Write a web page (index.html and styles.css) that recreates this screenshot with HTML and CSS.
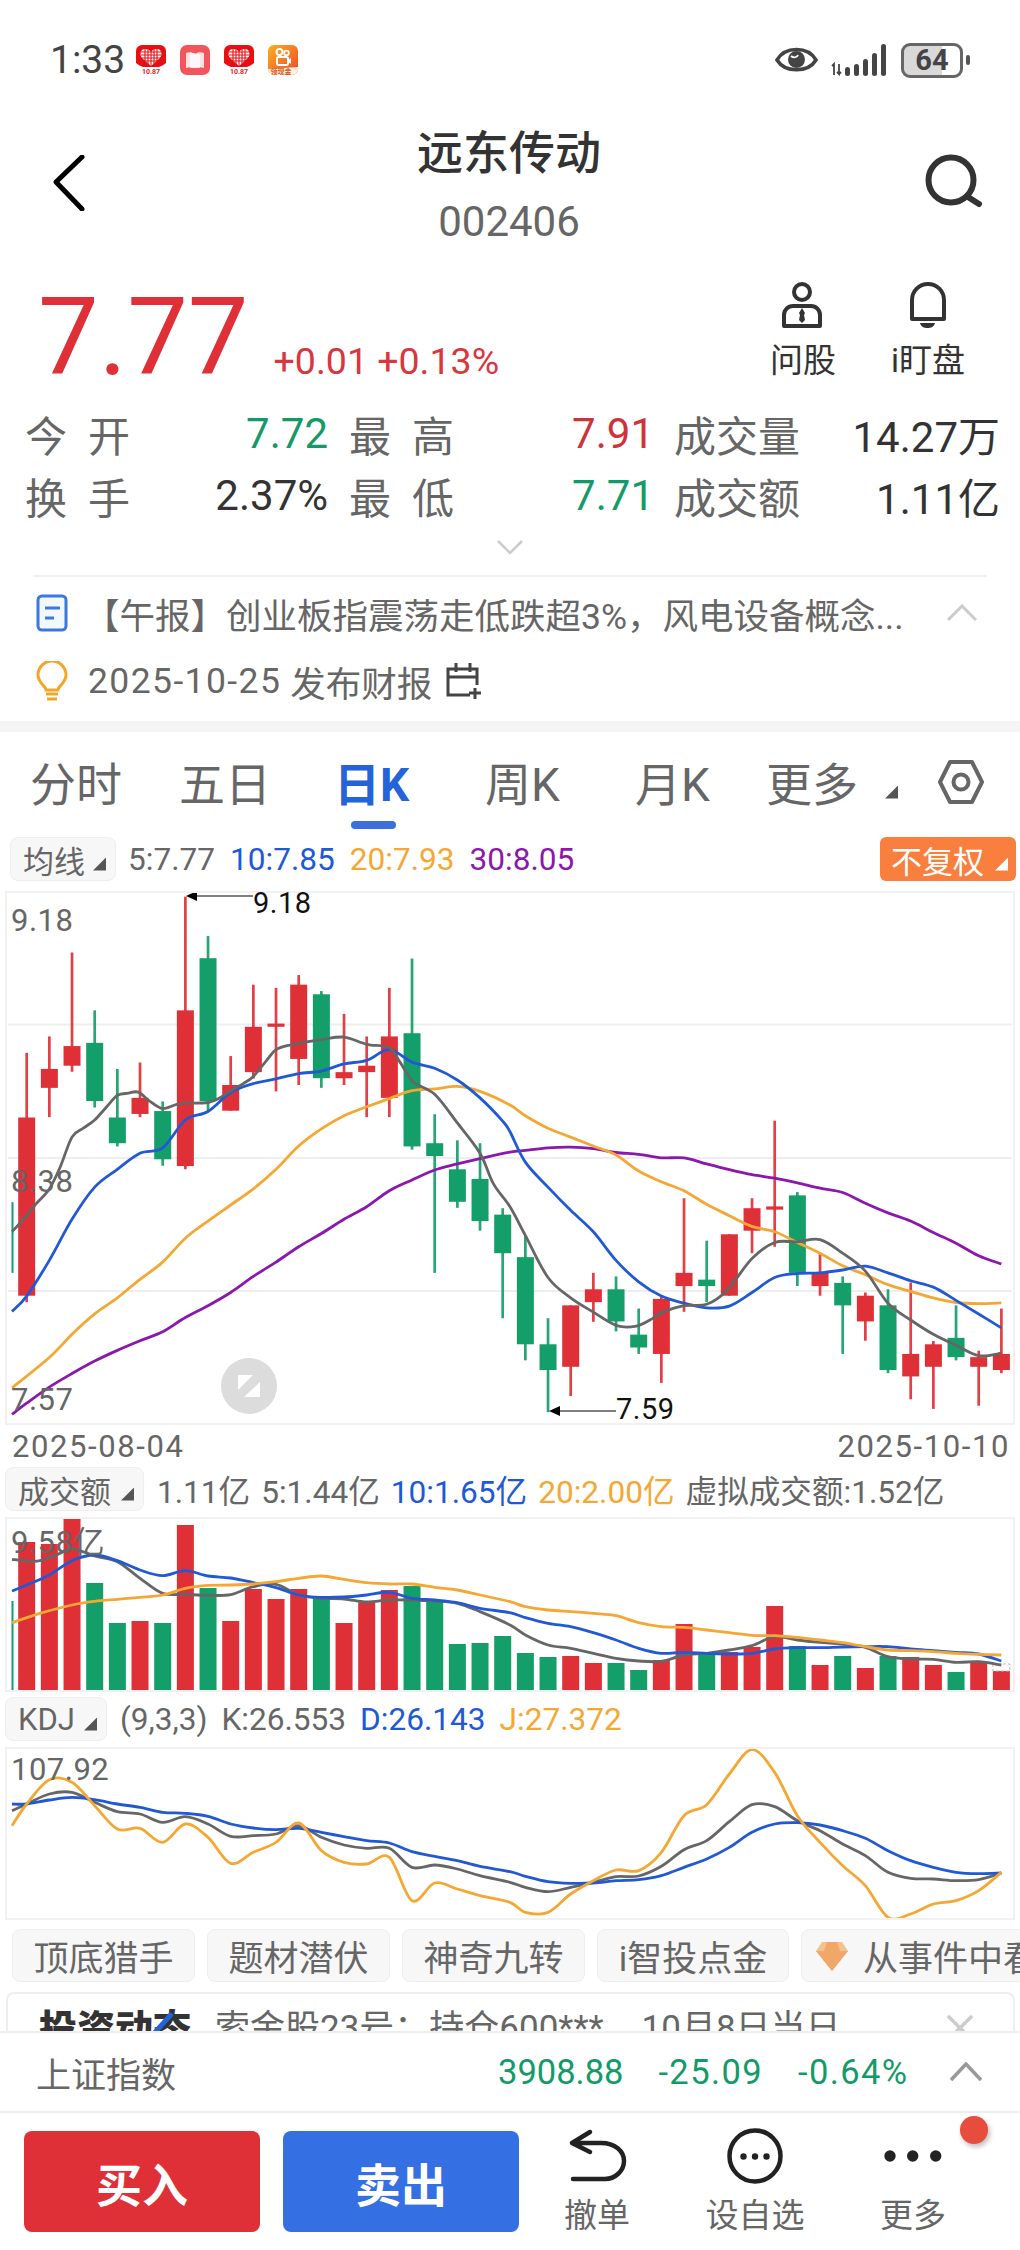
FILE: index.html
```html
<!DOCTYPE html>
<html lang="zh-CN">
<head>
  <meta charset="UTF-8">
  <meta name="viewport" content="width=device-width, initial-scale=1.0">
  <title>远东传动 002406</title>
  <link rel="stylesheet" href="styles.css">
</head>
<body>
  <div class="page">
    <div class="status">
      <span class="time">1:33</span>
      <svg class="app-icon" width="30" height="30" viewBox="0 0 30 30">
        <rect width="30" height="30" rx="6" fill="#fff"/>
        <path d="M0 6a6 6 0 0 1 6-6h18a6 6 0 0 1 6 6v12c-2 2-5 3-7 4H7c-2-1-5-2-7-4z" fill="#e60f14"/>
        <path d="M15 21L6 13C3 9 5 4 9 4c3 0 5 1 6 3 1-2 3-3 6-3 4 0 6 5 3 9z" fill="#fff"/>
        <path d="M5 7h20M5 10h20M5 13h20M8 16h14M9 3v16M12 3v18M15 3v18M18 3v18M21 3v16" stroke="#e60f14" stroke-width="1.1"/>
        <text x="15" y="29" class="app-text" fill="#d81e22">10.87</text>
      </svg>
      <svg class="app-icon" width="30" height="30" viewBox="0 0 30 30">
        <rect width="30" height="30" rx="7" fill="#f4545c"/>
        <path d="M6 8c3-1 6-1 9 1 3-2 6-2 9-1v15c-3-1-6-1-9 0-3-1-6-1-9 0z" fill="#fde3e3"/>
        <path d="M10 8h5v15h-5zM15 9h5v14h-5z" fill="#fff" opacity=".7"/>
      </svg>
      <svg class="app-icon" width="30" height="30" viewBox="0 0 30 30">
        <rect width="30" height="30" rx="6" fill="#fff"/>
        <path d="M0 6a6 6 0 0 1 6-6h18a6 6 0 0 1 6 6v12c-2 2-5 3-7 4H7c-2-1-5-2-7-4z" fill="#e60f14"/>
        <path d="M15 21L6 13C3 9 5 4 9 4c3 0 5 1 6 3 1-2 3-3 6-3 4 0 6 5 3 9z" fill="#fff"/>
        <path d="M5 7h20M5 10h20M5 13h20M8 16h14M9 3v16M12 3v18M15 3v18M18 3v18M21 3v16" stroke="#e60f14" stroke-width="1.1"/>
        <text x="15" y="29" class="app-text" fill="#d81e22">10.87</text>
      </svg>
      <svg class="app-icon" width="30" height="30" viewBox="0 0 30 30">
        <defs><linearGradient id="app-gold" x1="0" y1="0" x2="1" y2="1"><stop offset="0" stop-color="#fbb01c"/><stop offset="1" stop-color="#f0452c"/></linearGradient></defs>
        <rect width="30" height="30" rx="6" fill="url(#app-gold)"/>
        <path d="M0 24l30-2v2a6 6 0 0 1-6 6H6a6 6 0 0 1-6-6z" fill="#fff0d8"/>
        <circle cx="11.500" cy="7" r="3" fill="none" stroke="#fff" stroke-width="2"/>
        <circle cx="18.500" cy="8" r="2.300" fill="none" stroke="#fff" stroke-width="1.800"/>
        <rect x="9" y="12" width="11" height="8" rx="1.500" fill="none" stroke="#fff" stroke-width="2"/>
        <path d="M20 15l3-2v6l-3-2z" fill="#fff"/>
        <text x="13" y="28.500" class="app-text" fill="#d8541e">领现金</text>
      </svg>
      <span class="status-right">
        <svg width="44" height="28" viewBox="0 0 44 28">
          <path d="M2 14C10 0 33 0 41 14 33 27 10 27 2 14z" fill="none" stroke="#444" stroke-width="3.600"/>
          <circle cx="21.500" cy="13.500" r="8.500" fill="#444"/>
          <path d="M16 10c2 2 6 2 7-1" fill="none" stroke="#fff" stroke-width="1.800"/>
        </svg>
        <svg class="signal" width="60" height="34" viewBox="0 0 60 34">
          <path d="M2 23l2-2v11M9 21v10l-2-2m2 2l2-2" fill="none" stroke="#444" stroke-width="1.800"/>
          <rect x="15" y="24" width="5" height="9" rx="2.500" fill="#444"/>
          <rect x="24" y="21" width="5" height="12" rx="2.500" fill="#444"/>
          <rect x="33" y="16" width="5" height="17" rx="2.500" fill="#444"/>
          <rect x="42" y="10" width="5" height="23" rx="2.500" fill="#444"/>
          <rect x="51" y="1" width="5" height="32" rx="2.500" fill="#444"/>
        </svg>
        <span class="battery">64</span>
        <span class="battery-nub"></span>
      </span>
    </div>

    <div class="nav">
      <svg width="32" height="56" viewBox="0 0 32 56" class="back">
        <path d="M29 2L3 27l26 27" fill="none" stroke="#000" stroke-width="5" stroke-linecap="round" stroke-linejoin="round"/>
      </svg>
      <div class="title-box">
        <div class="name">远东传动</div>
        <div class="code">002406</div>
      </div>
      <svg width="58" height="54" viewBox="0 0 58 54" class="search">
        <circle cx="26" cy="26" r="22.500" fill="none" stroke="#333" stroke-width="6"/>
        <path d="M43 43l11 7" fill="none" stroke="#333" stroke-width="6" stroke-linecap="round"/>
      </svg>
    </div>

    <div class="quote">
      <div class="price-box">
        <span class="price">7.77</span>
        <span class="change">+0.01 +0.13%</span>
      </div>
      <div class="quote-actions">
        <div class="quote-action">
          <svg width="44" height="48" viewBox="0 0 44 48">
            <circle cx="21" cy="10" r="8" fill="none" stroke="#333" stroke-width="4"/>
            <path d="M3 44V33c0-5 4-9 9-9h18c5 0 9 4 9 9v11z" fill="none" stroke="#333" stroke-width="4" stroke-linejoin="round"/>
            <path d="M21 26l3 5-1 2 1 5-3 3-3-3 1-5-1-2z" fill="#333"/>
          </svg>
          <span>问股</span>
        </div>
        <div class="quote-action">
          <svg width="44" height="48" viewBox="0 0 44 48">
            <path d="M6 37V18a16 16 0 0 1 32 0v19z" fill="none" stroke="#333" stroke-width="4" stroke-linejoin="round"/>
            <path d="M14 41h15c-1 4-4 5-7.500 5S15 45 14 41z" fill="#333"/>
          </svg>
          <span>i盯盘</span>
        </div>
      </div>
    </div>

    <div class="stats">
      <span class="lbl lbl-wide"><i>今</i><i>开</i></span><span class="val green">7.72</span>
      <span class="lbl lbl-side"><i>最</i><i>高</i></span><span class="val red">7.91</span>
      <span class="lbl lbl-end">成交量</span><span class="val">14.27万</span>
      <span class="lbl lbl-wide"><i>换</i><i>手</i></span><span class="val">2.37%</span>
      <span class="lbl lbl-side"><i>最</i><i>低</i></span><span class="val green">7.71</span>
      <span class="lbl lbl-end">成交额</span><span class="val">1.11亿</span>
    </div>

    <div class="expand">
      <svg width="28" height="16" viewBox="0 0 28 16"><path d="M2 2l12 12L26 2" fill="none" stroke="#ccc" stroke-width="2.500"/></svg>
    </div>

    <div class="news">
      <svg class="row-icon" width="32" height="38" viewBox="0 0 32 38">
        <rect x="2" y="2" width="28" height="34" rx="4" fill="#f3f7fe" stroke="#3a78e0" stroke-width="3"/>
        <path d="M9 14h15M9 24h9" stroke="#3a78e0" stroke-width="3"/>
      </svg>
      <span class="news-text">【午报】创业板指震荡走低跌超3%，风电设备概念...</span>
      <svg width="32" height="18" viewBox="0 0 32 18" class="news-fold"><path d="M2 16L16 2l14 14" fill="none" stroke="#ccc" stroke-width="3"/></svg>
    </div>
    <div class="report">
      <svg class="row-icon" width="32" height="40" viewBox="0 0 32 40">
        <path d="M10 29c0-4-8-7-8-15a14 14 0 0 1 28 0c0 8-8 11-8 15z" fill="none" stroke="#f4a62a" stroke-width="3"/>
        <path d="M10 33h12M11 38h10" stroke="#f4a62a" stroke-width="3"/>
      </svg>
      <span class="report-date">2025-10-25</span>
      <span class="report-text">发布财报</span>
      <svg width="36" height="38" viewBox="0 0 36 38" class="calendar">
        <path d="M24 33H2V7h29v16M2 15h29M10 1v9M24 1v9M29 26v11M23 31h12" fill="none" stroke="#444" stroke-width="3"/>
      </svg>
    </div>

    <div class="band"></div>

    <div class="tabs">
      <span class="tab">分时</span>
      <span class="tab">五日</span>
      <span class="tab active">日K</span>
      <span class="tab">周K</span>
      <span class="tab">月K</span>
      <span class="tab tab-more">更多<b class="corner corner-more"></b></span>
      <svg width="46" height="44" viewBox="0 0 46 44" class="hex">
        <path d="M12 2h22l10 20-10 20H12L2 22z" fill="none" stroke="#666" stroke-width="4" stroke-linejoin="round"/>
        <circle cx="23" cy="22" r="7.500" fill="none" stroke="#666" stroke-width="4"/>
      </svg>
    </div>

    <div class="bar bar-ma">
      <span class="pick">均线<b class="corner"></b></span>
      <span class="gray">5:7.77</span>
      <span class="blue">10:7.85</span>
      <span class="orange">20:7.93</span>
      <span class="purple">30:8.05</span>
      <span class="adjust">不复权<b class="corner corner-white"></b></span>
    </div>

    <div class="chart chart-k">
      <svg id="k-chart" width="1006" height="530"></svg>
      <span class="axis axis-top">9.18</span>
      <span class="axis axis-mid">8.38</span>
      <span class="axis axis-low">7.57</span>
      <span class="mark mark-high">9.18</span>
      <span class="mark mark-low">7.59</span>
      <span class="zoom-btn">
        <svg width="56" height="56" viewBox="0 0 56 56">
          <circle cx="28" cy="28" r="28" fill="#dcdcdc"/>
          <path d="M17 17h15L17 32zM39 24v15H23z" fill="#fff"/>
        </svg>
      </span>
    </div>

    <div class="dates"><span>2025-08-04</span><span>2025-10-10</span></div>

    <div class="bar bar-vol">
      <span class="pick">成交额<b class="corner"></b></span>
      <span class="gray">1.11亿</span>
      <span class="gray">5:1.44亿</span>
      <span class="blue">10:1.65亿</span>
      <span class="orange">20:2.00亿</span>
      <span class="gray">虚拟成交额:1.52亿</span>
    </div>

    <div class="chart chart-vol">
      <svg id="vol-chart" width="1006" height="171"></svg>
      <span class="axis axis-vol">9.58亿</span>
    </div>

    <div class="bar bar-kdj">
      <span class="pick">KDJ<b class="corner"></b></span>
      <span class="gray">(9,3,3)</span>
      <span class="gray">K:26.553</span>
      <span class="blue">D:26.143</span>
      <span class="orange">J:27.372</span>
    </div>

    <div class="chart chart-kdj">
      <svg id="kdj-chart" width="1006" height="169"></svg>
      <span class="axis axis-kdj">107.92</span>
    </div>

    <div class="chips">
      <span class="chip">顶底猎手</span>
      <span class="chip">题材潜伏</span>
      <span class="chip">神奇九转</span>
      <span class="chip chip-wide">i智投点金</span>
      <span class="chip chip-gem">
        <svg width="34" height="30" viewBox="0 0 34 30">
          <path d="M7 1h20l6 9-16 20L1 10z" fill="#f5c28c"/>
          <path d="M1 10h32L17 30zM12 1h10l3 9H9z" fill="#efa868"/>
        </svg>
        从事件中看机会
      </span>
    </div>

    <div class="promo">
      <span class="promo-logo">投资动态</span>
      <span class="promo-slash"></span>
      <span class="promo-text">索金股23号：持仓600***</span>
      <span class="promo-date">10月8日当日</span>
      <svg width="28" height="28" viewBox="0 0 28 28" class="promo-close"><path d="M2 2l24 24M26 2L2 26" stroke="#ccc" stroke-width="3.500"/></svg>
    </div>

    <div class="index">
      <span class="index-name">上证指数</span>
      <span class="index-val">3908.88</span>
      <span class="index-val index-chg">-25.09</span>
      <span class="index-val index-chg">-0.64%</span>
      <svg width="34" height="20" viewBox="0 0 34 20"><path d="M2 18L17 2l15 16" fill="none" stroke="#999" stroke-width="3.500"/></svg>
    </div>

    <div class="trade">
      <button class="trade-btn buy">买入</button>
      <button class="trade-btn sell">卖出</button>
      <div class="trade-actions">
        <div class="trade-action">
          <svg width="60" height="58" viewBox="0 0 60 58">
            <path d="M23 5L5 16l18 9M5 16h29c14 0 23 8 23 18s-9 18-19 18H6" fill="none" stroke="#222" stroke-width="4.500" stroke-linecap="round" stroke-linejoin="round"/>
          </svg>
          <span>撤单</span>
        </div>
        <div class="trade-action">
          <svg width="60" height="58" viewBox="0 0 60 58">
            <circle cx="30" cy="29" r="25.500" fill="none" stroke="#222" stroke-width="4.500"/>
            <circle cx="18.500" cy="29.500" r="3.200" fill="#222"/>
            <circle cx="30" cy="29.500" r="3.200" fill="#222"/>
            <circle cx="41.500" cy="29.500" r="3.200" fill="#222"/>
          </svg>
          <span>设自选</span>
        </div>
        <div class="trade-action">
          <svg width="60" height="58" viewBox="0 0 60 58">
            <circle cx="7" cy="29" r="5.700" fill="#222"/>
            <circle cx="29.700" cy="29" r="5.700" fill="#222"/>
            <circle cx="52.700" cy="29" r="5.700" fill="#222"/>
          </svg>
          <span>更多</span>
        </div>
        <span class="dot"></span>
      </div>
    </div>
  </div>

  <script src="chart.js"></script>
</body>
</html>
```

FILE: styles.css
```css
* {
  box-sizing: border-box;
}

body {
  margin: 0;
  background-color: #fff;
  font-family: Roboto, "Noto Sans CJK SC", sans-serif;
  color: #333;
}

.page {
  width: 1020px;
  height: 2250px;
  overflow: hidden;
}

svg {
  display: block;
  flex: none;
}

.app-text {
  font-size: 7px;
  font-weight: 700;
  text-anchor: middle;
}

/* status bar */
.status {
  display: flex;
  align-items: center;
  height: 90px;
  padding: 30px 0 0 50px;
}

.time {
  font-size: 39px;
  color: #444;
  width: 86px;
}

.app-icon {
  margin-right: 14px;
}

.status-right {
  display: flex;
  align-items: center;
  margin-left: auto;
  margin-right: 50px;
}

.signal {
  margin: 0 11px 0 11px;
}

.battery {
  width: 62px;
  height: 35px;
  border: 3px solid #666;
  border-radius: 9px;
  background: linear-gradient(90deg, #d9d9d9 68%, #fff 68%);
  color: #444;
  font-size: 29px;
  font-weight: 700;
  line-height: 29px;
  text-align: center;
}

.battery-nub {
  width: 4px;
  height: 10px;
  margin-left: 3px;
  border-radius: 2px;
  background-color: #555;
}

/* title */
.nav {
  display: flex;
  align-items: flex-start;
  justify-content: space-between;
  height: 180px;
  padding: 33px 37px 0 53px;
}

.back {
  margin-top: 32px;
}

.search {
  margin-top: 31px;
}

.title-box {
  text-align: center;
  margin-left: 8px;
}

.name {
  font-size: 46px;
  font-weight: 500;
  line-height: 60px;
  color: #333;
}

.code {
  margin-top: 9px;
  font-size: 42px;
  line-height: 60px;
  color: #666;
}

/* price */
.quote {
  display: flex;
  justify-content: space-between;
  height: 132px;
  padding: 12px 42px 0 38px;
}

.price-box {
  display: flex;
  align-items: baseline;
}

.price {
  font-size: 108px;
  line-height: 110px;
  color: #e03037;
}

.change {
  margin-left: 25px;
  font-size: 37.5px;
  color: #d9363e;
}

.quote-actions {
  display: flex;
  gap: 25px;
}

.quote-action {
  display: flex;
  flex-direction: column;
  align-items: center;
  width: 100px;
  font-size: 33px;
  line-height: 46px;
  color: #333;
}

.quote-action span {
  margin-top: 8px;
}

/* stats table */
.stats {
  display: grid;
  grid-template-columns: 106px 197px 126px 200px 146px 200px;
  grid-auto-rows: 62px;
  align-items: center;
  padding-left: 25px;
  font-size: 42px;
}

.lbl {
  color: #666;
}

.lbl i {
  font-style: normal;
}

.lbl-wide,
.lbl-side {
  display: flex;
  justify-content: space-between;
  width: 105px;
}

.lbl-side {
  justify-self: end;
}

.lbl-end {
  justify-self: end;
}

.val {
  text-align: right;
  color: #333;
}

.green {
  color: #149a68;
}

.red {
  color: #d0323a;
}

.expand {
  display: flex;
  justify-content: center;
  padding-top: 13px;
  height: 49px;
}

/* news rows */
.news {
  display: flex;
  align-items: center;
  height: 74px;
  margin: 0 33px;
  border-top: 2px solid #f0f0f0;
  padding: 0 9px 0 3px;
  font-size: 35.5px;
  color: #666;
}

.news .row-icon {
  margin-right: 16px;
}

.row-icon {
  margin-right: 20px;
}

.news-text {
  flex: 1;
  white-space: nowrap;
  overflow: hidden;
}

.report {
  display: flex;
  align-items: center;
  height: 64px;
  padding-left: 36px;
  font-size: 35.5px;
  color: #666;
}

.report-date {
  letter-spacing: 1.4px;
  margin-right: 9px;
  white-space: nowrap;
}

.report-text {
  white-space: nowrap;
}

.calendar {
  margin-left: 14px;
}

.band {
  height: 19px;
  border-bottom: 11px solid #f4f4f4;
}

/* period tabs */
.tabs {
  display: grid;
  grid-template-columns: 149px 155px 151px 150px 131px 172px 46px;
  align-items: center;
  height: 105px;
  padding-left: 30px;
}

.tab {
  position: relative;
  font-size: 46px;
  line-height: 96px;
  color: #666;
}

.tab.active {
  font-weight: 700;
  color: #2563d9;
}

.tab.active::after {
  content: "";
  position: absolute;
  left: 17px;
  top: 84px;
  width: 45px;
  height: 8px;
  border-radius: 4px;
  background-color: #3a6fdc;
}

.tab-more {
  display: flex;
  align-items: center;
}

.hex {
  margin-bottom: 6px;
}

/* legend bars */
.bar {
  display: flex;
  align-items: center;
  height: 44px;
  gap: 14px;
  font-size: 31.6px;
  white-space: nowrap;
}

.bar-ma {
  padding: 0 4px 0 10px;
  gap: 15px;
}

.bar-vol {
  padding-left: 5px;
  gap: 11px;
}

.bar-kdj {
  margin-top: 5px;
  padding-left: 5px;
}

.pick {
  display: flex;
  align-items: center;
  justify-content: space-between;
  height: 44px;
  padding: 0 9px 0 12px;
  border: 1px solid #eee;
  border-radius: 8px;
  background-color: #f7f7f7;
  color: #666;
  font-size: 31px;
}

.bar-ma .pick {
  width: 106px;
  margin-right: -3px;
}

.bar-vol .pick {
  width: 139px;
  margin-right: 2px;
}

.bar-kdj .pick {
  width: 102px;
  margin-right: -1px;
}

.corner {
  display: block;
  width: 13px;
  height: 13px;
  margin-top: 10px;
  background-color: #555;
  clip-path: polygon(100% 0, 100% 100%, 0 100%);
}

.corner-more {
  margin: 15px 0 0 27px;
}

.corner-white {
  background-color: #fff;
  margin-left: 11px;
}

.gray {
  color: #666;
}

.blue {
  color: #2058d6;
}

.orange {
  color: #f5a733;
}

.purple {
  color: #8b17ae;
}

.adjust {
  display: flex;
  align-items: center;
  height: 44px;
  margin-left: auto;
  padding: 0 8px 0 11px;
  border-radius: 6px;
  background-color: #f97f3e;
  color: #fff;
  font-size: 31px;
}

/* charts */
.chart {
  position: relative;
  margin: 0 5px;
  width: 1010px;
  border: 2px solid #f1f1f1;
  background-color: #fff;
}

.chart-k {
  height: 534px;
  margin-top: 10px;
}

.chart-vol {
  height: 175px;
  margin-top: 6px;
}

.chart-kdj {
  height: 173px;
  margin-top: 6px;
}

.axis,
.mark {
  position: absolute;
  font-size: 31px;
  line-height: 36px;
  letter-spacing: 0.5px;
  color: #666;
}

.axis-top {
  left: 4px;
  top: 10px;
}

.axis-mid {
  left: 4px;
  top: 271px;
}

.axis-low {
  left: 4px;
  top: 489px;
}

.axis-vol {
  left: 4px;
  top: 6px;
  white-space: nowrap;
}

.axis-kdj {
  left: 4px;
  top: 3px;
}

.mark {
  color: #111;
  font-size: 29px;
}

.mark-high {
  left: 246px;
  top: -8px;
}

.mark-low {
  left: 609px;
  top: 498px;
}

.zoom-btn {
  position: absolute;
  left: 214px;
  top: 465px;
}

.dates {
  display: flex;
  justify-content: space-between;
  align-items: center;
  height: 42px;
  padding: 0 10px 0 12px;
  font-size: 31px;
  letter-spacing: 1.6px;
  color: #666;
}

/* chips */
.chips {
  display: flex;
  gap: 12px;
  margin-top: 9px;
  padding-left: 12px;
  white-space: nowrap;
}

.chip {
  display: flex;
  align-items: center;
  justify-content: center;
  flex: none;
  width: 183px;
  height: 53px;
  border: 1px solid #eee;
  border-radius: 8px;
  background-color: #f7f7f7;
  font-size: 35px;
  color: #666;
}

.chip-wide {
  width: 192px;
}

.chip-gem {
  justify-content: flex-start;
  gap: 14px;
  width: 320px;
  padding-left: 13px;
}

.promo {
  display: flex;
  align-items: flex-start;
  height: 39px;
  margin: 10px 5px 0 6px;
  padding: 12px 0 0 31px;
  border: 2px solid #eee;
  border-bottom: none;
  border-radius: 8px 8px 0 0;
  overflow: hidden;
  position: relative;
  white-space: nowrap;
}

.promo-logo {
  font-size: 38px;
  font-weight: 900;
  line-height: 46px;
  color: #333;
}

.promo-slash {
  position: absolute;
  left: 152px;
  top: 16px;
  width: 5px;
  height: 28px;
  background-color: #2563d9;
  transform: rotate(42deg);
}

.promo-text,
.promo-date {
  margin-left: 24px;
  font-size: 35px;
  line-height: 46px;
  color: #666;
}

.promo-date {
  margin-left: 38px;
}

.promo-close {
  margin: 8px 39px 0 auto;
}

/* index row */
.index {
  display: flex;
  align-items: center;
  height: 82px;
  padding-left: 36px;
  border-top: 2px solid #eee;
  border-bottom: 2px solid #eee;
  font-size: 34.5px;
}

.index-name {
  color: #666;
  font-size: 35px;
  width: 462px;
}

.index-val {
  color: #149a68;
  margin-right: 35px;
}

.index-chg {
  letter-spacing: 1.4px;
}

.index-chg:nth-of-type(4) {
  margin-right: 40px;
}

/* bottom buttons */
.trade {
  display: flex;
  align-items: flex-start;
  padding: 18px 0 0 24px;
  gap: 23px;
}

.trade-btn {
  width: 236px;
  height: 101px;
  border: none;
  border-radius: 8px;
  color: #fff;
  font-family: inherit;
  font-size: 46px;
  font-weight: 700;
}

.buy {
  background-color: #e03037;
}

.sell {
  background-color: #346fe3;
}

.trade-actions {
  position: relative;
  display: grid;
  grid-template-columns: 158px 158px 158px;
  margin: -4px 0 0 -24px;
}

.trade-action {
  display: flex;
  flex-direction: column;
  align-items: center;
  font-size: 33px;
  line-height: 40px;
  color: #666;
}

.trade-action span {
  margin-top: 11px;
}

.dot {
  position: absolute;
  left: 442px;
  top: -11px;
  width: 28px;
  height: 28px;
  border-radius: 50%;
  background-color: #e74c3c;
  box-shadow: 2px 3px 5px rgba(0, 0, 0, 0.25);
}
```

FILE: chart.js
```js
// numbers read off the picture, x in 1/3 px, y scaled per chart
const RED = '#e03037';
const GREEN = '#149e6a';
const SVG_NS = 'http://www.w3.org/2000/svg';

function add(svg, tag, attrs) {
  const el = document.createElementNS(SVG_NS, tag);
  Object.keys(attrs).forEach(k => el.setAttribute(k, attrs[k]));
  svg.appendChild(el);
}

function candleX(i) {
  return -2.97 + 22.667 * i;
}

// left half and right half were read separately, right x starts at 1530
function join(left, right) {
  const pts = [];
  for (let i = 0; i < left.length; i += 2) pts.push([left[i], left[i + 1]]);
  for (let i = 0; i < right.length; i += 2) pts.push([right[i] + 1530, right[i + 1]]);
  return pts;
}

function drawLine(svg, pts, toY, color) {
  const p = pts.map(q => [q[0] / 3 - 7, toY(q[1])]);
  let d = 'M' + p[0][0] + ' ' + p[0][1];
  for (let i = 0; i < p.length - 1; i++) {
    const a = p[Math.max(i - 1, 0)];
    const b = p[i];
    const c = p[i + 1];
    const e = p[Math.min(i + 2, p.length - 1)];
    d += 'C' + (b[0] + (c[0] - a[0]) / 6) + ' ' + (b[1] + (c[1] - a[1]) / 6) + ' ' +
      (c[0] - (e[0] - b[0]) / 6) + ' ' + (c[1] - (e[1] - b[1]) / 6) + ' ' + c[0] + ' ' + c[1];
  }
  add(svg, 'path', { d: d, fill: 'none', stroke: color, 'stroke-width': 2.8, 'stroke-linejoin': 'round' });
}

// ---- K line
const kY = z => z / 2.8 - 13;
const candles = [
  [902, 0, 0, 1100, 'g'], [484, 665, 1164, 1182, 'r'], [438, 529, 582, 664, 'r'], [203, 465, 520, 537, 'r'],
  [365, 456, 619, 637, 'g'], [529, 665, 737, 746, 'g'], [511, 610, 655, 664, 'r'], [620, 647, 782, 800, 'g'],
  [47, 365, 801, 810, 'r'], [157, 219, 619, 647, 'g'], [493, 574, 646, 646, 'r'], [293, 411, 538, 556, 'r'],
  [302, 402, 411, 592, 'r'], [266, 293, 501, 574, 'r'], [311, 320, 555, 582, 'g'], [375, 538, 555, 574, 'r'],
  [438, 520, 538, 664, 'r'], [302, 438, 610, 664, 'r'], [220, 429, 746, 755, 'g'], [656, 737, 773, 1100, 'g'],
  [729, 810, 901, 918, 'g'], [737, 837, 955, 982, 'g'], [919, 937, 1045, 1227, 'g'], [995, 1056, 1300, 1345, 'g'],
  [1227, 1300, 1372, 1490, 'g'], [1191, 1191, 1363, 1445, 'r'], [1100, 1146, 1182, 1237, 'r'], [1110, 1146, 1236, 1264, 'g'],
  [1200, 1273, 1309, 1327, 'g'], [1165, 1173, 1327, 1408, 'r'], [891, 1100, 1137, 1209, 'r'], [1010, 1119, 1137, 1182, 'g'],
  [992, 992, 1164, 1164, 'r'], [891, 919, 982, 1045, 'r'], [674, 914, 923, 1027, 'r'], [874, 883, 1100, 1137, 'g'],
  [1045, 1100, 1137, 1164, 'r'], [1110, 1128, 1191, 1327, 'g'], [1155, 1164, 1236, 1290, 'r'], [1146, 1191, 1372, 1381, 'g'],
  [1127, 1327, 1390, 1454, 'r'], [1291, 1300, 1363, 1481, 'r'], [1191, 1282, 1336, 1345, 'g'], [1318, 1336, 1363, 1472, 'r'],
  [1200, 1327, 1372, 1381, 'r']
];

const ma5 = join([36, 985, 80, 940, 110, 905, 148, 865, 180, 805, 216, 720, 250, 695, 284, 672, 320, 635, 352, 603, 385, 597, 415, 594, 450, 620, 488, 640, 530, 628, 556, 625, 624, 623, 660, 610, 692, 590, 730, 570, 760, 550, 800, 505, 828, 475, 870, 462, 964, 447, 1032, 440, 1100, 460, 1168, 470, 1200, 510, 1240, 565, 1304, 600, 1372, 680, 1440, 765, 1480, 850],
  [0, 915, 46, 995, 114, 1113, 182, 1170, 250, 1210, 318, 1247, 375, 1250, 420, 1232, 454, 1212, 522, 1192, 590, 1188, 650, 1150, 726, 1060, 794, 1015, 862, 1013, 930, 1007, 998, 1045, 1066, 1095, 1134, 1185, 1202, 1232, 1270, 1272, 1338, 1303, 1406, 1332, 1474, 1325]);
const ma10 = join([36, 1208, 80, 1165, 148, 1065, 216, 950, 284, 860, 352, 810, 420, 765, 488, 750, 556, 672, 624, 648, 692, 595, 760, 570, 828, 557, 896, 542, 964, 535, 1032, 515, 1100, 505, 1168, 475, 1236, 510, 1304, 527, 1372, 560, 1440, 610, 1508, 675],
  [0, 705, 46, 790, 114, 860, 182, 925, 250, 985, 318, 1065, 386, 1125, 454, 1165, 522, 1185, 590, 1198, 658, 1193, 726, 1155, 794, 1113, 862, 1102, 930, 1100, 998, 1092, 1066, 1081, 1134, 1100, 1202, 1122, 1270, 1140, 1338, 1177, 1406, 1215, 1474, 1254]);
const ma20 = join([36, 1422, 148, 1337, 216, 1272, 284, 1215, 352, 1170, 420, 1118, 488, 1070, 556, 1003, 624, 955, 692, 910, 760, 865, 828, 810, 896, 745, 964, 697, 1032, 660, 1100, 635, 1168, 612, 1236, 590, 1304, 585, 1372, 578, 1440, 592],
  [0, 630, 46, 660, 114, 695, 182, 720, 250, 745, 318, 770, 386, 815, 454, 845, 522, 870, 590, 908, 658, 940, 726, 970, 794, 985, 862, 1015, 930, 1045, 998, 1080, 1066, 1105, 1134, 1133, 1202, 1152, 1270, 1170, 1338, 1183, 1406, 1186, 1474, 1184]);
const ma30 = join([36, 1496, 80, 1465, 148, 1420, 216, 1382, 284, 1347, 352, 1317, 420, 1290, 488, 1265, 556, 1225, 624, 1192, 692, 1155, 760, 1110, 828, 1070, 896, 1027, 964, 990, 1032, 950, 1100, 915, 1168, 870, 1236, 840, 1304, 812, 1372, 795, 1440, 780],
  [0, 762, 46, 757, 114, 750, 182, 748, 250, 752, 318, 763, 386, 768, 454, 778, 522, 778, 590, 795, 658, 811, 726, 825, 794, 835, 862, 848, 930, 863, 998, 875, 1066, 905, 1134, 932, 1202, 955, 1270, 987, 1338, 1017, 1406, 1052, 1474, 1075]);

const kSvg = document.getElementById('k-chart');
[131.5, 265, 398].forEach(y => {
  add(kSvg, 'line', { x1: 1, x2: 1005, y1: y, y2: y, stroke: '#eeeeee', 'stroke-width': 2 });
});

candles.forEach((c, i) => {
  const x = candleX(i);
  const color = c[4] === 'r' ? RED : GREEN;
  if (i === 0) {
    // only the right edge of the first candle shows past the clip
    add(kSvg, 'rect', { x: 4.5, y: kY(c[0]), width: 2, height: (c[3] - c[0]) / 2.8, fill: color });
    return;
  }
  add(kSvg, 'line', { x1: x, x2: x, y1: kY(c[0]), y2: kY(c[3]), stroke: color, 'stroke-width': 2.7, opacity: 0.92 });
  if (c[2] > c[1]) {
    add(kSvg, 'rect', { x: x - 8.5, y: kY(c[1]), width: 17, height: (c[2] - c[1]) / 2.8, fill: color });
  }
});

drawLine(kSvg, ma30, kY, '#8b17ae');
drawLine(kSvg, ma20, kY, '#f5a733');
drawLine(kSvg, ma10, kY, '#2058d6');
drawLine(kSvg, ma5, kY, '#666666');

// high and low markers
add(kSvg, 'line', { x1: 188, x2: 246, y1: 3, y2: 3, stroke: '#555', 'stroke-width': 1.6 });
add(kSvg, 'path', { d: 'M179 3l11-5v10z', fill: '#000' });
add(kSvg, 'line', { x1: 550, x2: 609, y1: 518, y2: 518, stroke: '#555', 'stroke-width': 1.6 });
add(kSvg, 'path', { d: 'M542 518l11-5v10z', fill: '#000' });

// ---- turnover
const volY = z => z / 3 - 79;
const volBars = [
  [483, 'g'], [306, 'r'], [312, 'r'], [237, 'r'], [429, 'g'], [549, 'g'], [543, 'r'], [549, 'g'], [255, 'r'],
  [444, 'g'], [543, 'r'], [447, 'r'], [477, 'r'], [447, 'r'], [475, 'g'], [549, 'r'], [487, 'r'], [450, 'r'],
  [438, 'g'], [483, 'g'], [612, 'g'], [609, 'g'], [588, 'g'], [639, 'g'], [651, 'g'], [648, 'r'], [669, 'r'],
  [669, 'g'], [690, 'g'], [660, 'r'], [552, 'r'], [642, 'g'], [636, 'r'], [621, 'r'], [498, 'r'], [618, 'g'],
  [675, 'r'], [648, 'g'], [684, 'r'], [648, 'g'], [651, 'r'], [675, 'r'], [696, 'g'], [663, 'r'], [693, 'r']
];

const volGray = join([36, 358, 80, 363, 120, 362, 180, 340, 216, 325, 284, 348, 352, 365, 420, 415, 488, 460, 556, 463, 624, 466, 692, 464, 760, 440, 828, 433, 896, 465, 964, 475, 1032, 477, 1100, 486, 1168, 480, 1236, 480, 1304, 483, 1372, 490, 1440, 515],
  [0, 555, 46, 585, 114, 615, 182, 625, 250, 640, 318, 655, 386, 663, 454, 664, 522, 645, 590, 640, 658, 630, 726, 617, 794, 590, 862, 600, 930, 607, 998, 612, 1066, 622, 1134, 650, 1202, 657, 1270, 658, 1338, 667, 1406, 665, 1474, 675]);
const volBlue = join([36, 453, 80, 435, 148, 405, 216, 362, 284, 345, 352, 362, 420, 390, 488, 407, 556, 392, 624, 408, 692, 414, 760, 428, 828, 443, 896, 465, 964, 472, 1032, 471, 1100, 465, 1168, 457, 1236, 475, 1304, 480, 1372, 488, 1440, 505],
  [0, 518, 46, 533, 114, 550, 182, 560, 250, 578, 318, 600, 386, 625, 454, 640, 522, 637, 590, 640, 658, 642, 726, 640, 794, 627, 862, 623, 930, 623, 998, 621, 1066, 620, 1134, 620, 1202, 627, 1270, 632, 1338, 637, 1406, 642, 1474, 663]);
const volOrange = join([36, 548, 120, 520, 216, 495, 284, 484, 352, 478, 420, 472, 488, 465, 556, 445, 624, 436, 692, 435, 760, 432, 828, 425, 896, 415, 964, 408, 1032, 418, 1100, 428, 1168, 432, 1236, 432, 1304, 442, 1372, 450, 1440, 465],
  [0, 485, 46, 500, 114, 510, 182, 515, 250, 520, 318, 527, 386, 548, 454, 560, 522, 562, 590, 570, 658, 578, 726, 586, 794, 587, 862, 592, 930, 600, 998, 608, 1066, 620, 1134, 630, 1202, 632, 1270, 635, 1338, 640, 1406, 643, 1474, 645]);

const volSvg = document.getElementById('vol-chart');
volBars.forEach((b, i) => {
  const w = i === 0 ? 2 : 17;
  const x = i === 0 ? 4.5 : candleX(i) - 8.5;
  add(volSvg, 'rect', { x: x, y: volY(b[0]), width: w, height: volY(752) - volY(b[0]), fill: b[1] === 'r' ? RED : GREEN });
});
add(volSvg, 'rect', { x: candleX(44) - 8.5, y: volY(672), width: 17, height: 7, fill: 'none', stroke: '#bbb', 'stroke-width': 1, 'stroke-dasharray': '3 2' });
drawLine(volSvg, volGray, volY, '#666666');
drawLine(volSvg, volBlue, volY, '#2058d6');
drawLine(volSvg, volOrange, volY, '#f5a733');

// ---- KDJ
const kdjY = z => z / 3 - 310;
const kLine = join([36, 1115, 80, 1095, 148, 1065, 216, 1060, 284, 1090, 352, 1118, 420, 1125, 488, 1150, 556, 1133, 624, 1155, 692, 1192, 760, 1190, 828, 1185, 896, 1160, 964, 1195, 1032, 1218, 1100, 1228, 1168, 1228, 1236, 1285, 1304, 1278, 1372, 1290, 1440, 1310],
  [0, 1330, 46, 1345, 114, 1358, 182, 1345, 250, 1330, 318, 1313, 386, 1311, 454, 1282, 522, 1232, 590, 1205, 658, 1148, 726, 1097, 794, 1103, 862, 1145, 930, 1175, 998, 1215, 1066, 1250, 1134, 1300, 1202, 1318, 1270, 1320, 1338, 1325, 1406, 1322, 1474, 1302]);
const dLine = join([36, 1095, 80, 1095, 148, 1083, 216, 1075, 284, 1082, 352, 1095, 420, 1105, 488, 1120, 556, 1123, 624, 1132, 692, 1155, 760, 1167, 828, 1172, 896, 1168, 964, 1180, 1032, 1193, 1100, 1205, 1168, 1212, 1236, 1238, 1304, 1252, 1372, 1265, 1440, 1282],
  [0, 1298, 46, 1312, 114, 1328, 182, 1333, 250, 1332, 318, 1325, 386, 1322, 454, 1310, 522, 1285, 590, 1260, 658, 1225, 726, 1180, 794, 1155, 862, 1151, 930, 1158, 998, 1175, 1066, 1198, 1134, 1235, 1202, 1265, 1270, 1285, 1338, 1300, 1406, 1304, 1474, 1302]);
const jLine = join([36, 1160, 80, 1095, 148, 1022, 216, 1030, 284, 1100, 352, 1170, 420, 1168, 488, 1210, 556, 1155, 624, 1195, 692, 1273, 760, 1240, 828, 1210, 896, 1152, 964, 1235, 1032, 1270, 1100, 1275, 1168, 1255, 1236, 1385, 1304, 1332, 1372, 1350, 1440, 1370],
  [0, 1390, 46, 1420, 114, 1420, 182, 1365, 250, 1325, 318, 1293, 386, 1295, 454, 1240, 522, 1130, 590, 1097, 658, 1005, 726, 932, 794, 1000, 862, 1130, 930, 1210, 998, 1280, 1066, 1340, 1134, 1435, 1202, 1425, 1270, 1395, 1338, 1385, 1406, 1355, 1474, 1300]);

const kdjSvg = document.getElementById('kdj-chart');
drawLine(kdjSvg, kLine, kdjY, '#666666');
drawLine(kdjSvg, dLine, kdjY, '#2058d6');
drawLine(kdjSvg, jLine, kdjY, '#f5a733');
```
